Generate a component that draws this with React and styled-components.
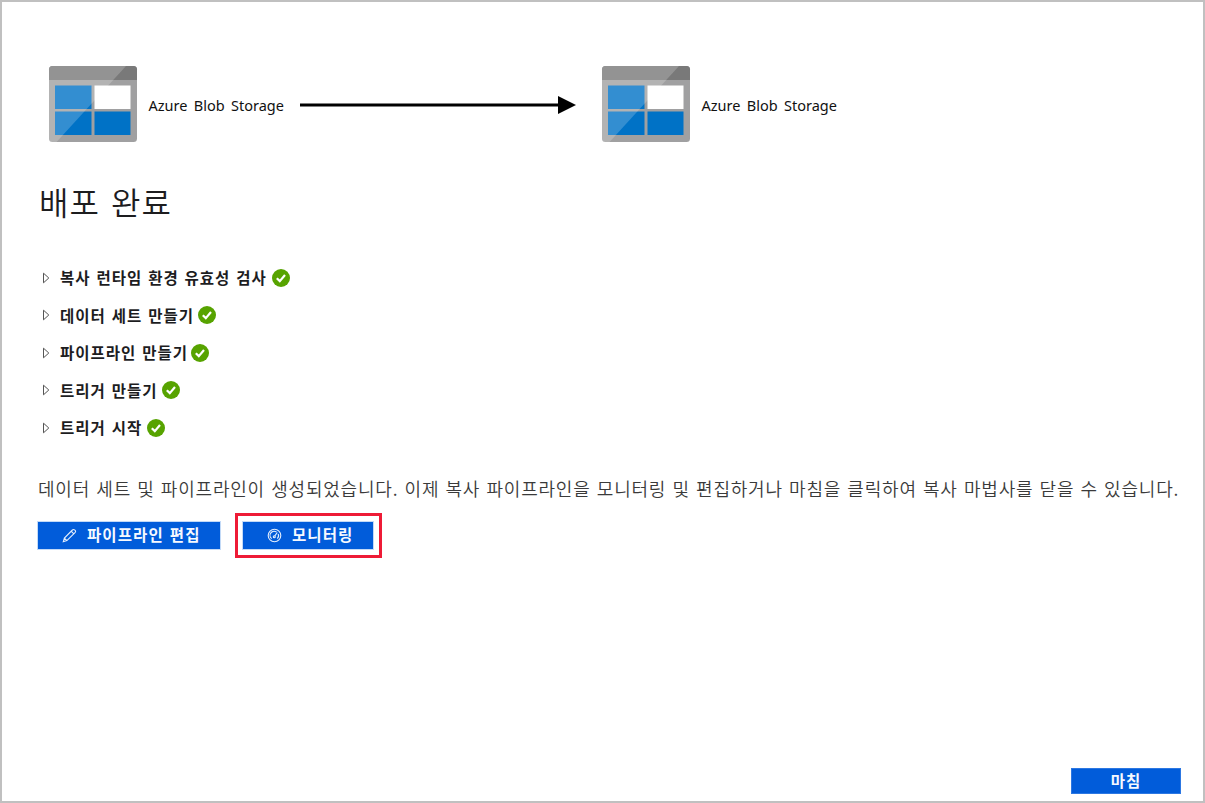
import React from "react";
import styled, { createGlobalStyle } from "styled-components";

const Global = createGlobalStyle`
  * { box-sizing: border-box; }
  body { margin: 0; background: #fff; }
`;

const Page = styled.main`
  width: 1205px;
  height: 803px;
  border: 2px solid #c0c0c0;
  padding: 62px 22px 7px 35px;
  display: flex;
  flex-direction: column;
  align-items: flex-start;
  background: #fff;
  font-family: "Noto Sans CJK KR", sans-serif;
  color: #1d1d1f;
  white-space: nowrap;
`;

const Flow = styled.section`
  display: flex;
  align-items: center;
  height: 80px;
  padding-left: 11px;
`;

const StoreName = styled.span`
  width: 136px;
  margin: 1px 15px 0 10.5px;
  font-family: "Noto Sans", sans-serif;
  font-size: 14.5px;
  letter-spacing: 0;
  word-spacing: 2.6px;
  line-height: 20px;
  color: #111;
`;

const Arrow = styled.svg`
  width: 276px;
  height: 20px;
  margin: 2px 25.5px 0 0;
`;

const StoreSvg = styled.svg`
  width: 90px;
  height: 78px;
`;

const Title = styled.h1`
  margin: 32px 0 0 2px;
  font-size: 32px;
  font-weight: 350;
  line-height: 50px;
  letter-spacing: 1px;
  word-spacing: 3px;
`;

const Steps = styled.ul`
  list-style: none;
  margin: 33px 0 0;
  padding: 0 0 0 5px;
`;

const Step = styled.li`
  display: flex;
  align-items: center;
  height: 37.5px;
`;

const Caret = styled.svg`
  width: 8px;
  height: 12px;
  margin-right: 10px;
`;

const StepLabel = styled.span`
  width: ${(p) => p.$width}px;
  padding-bottom: 1px;
  font-size: 15.5px;
  font-weight: 700;
  line-height: 24px;
  letter-spacing: 1px;
  word-spacing: 1.4px;
`;

const Check = styled.svg`
  width: 18px;
  height: 18px;
`;

const Message = styled.p`
  margin: 27px 0 0 1px;
  font-size: 18px;
  font-weight: 350;
  line-height: 28px;
  letter-spacing: 0.8px;
  word-spacing: 1.4px;
  color: #3a3a3a;
`;

const Actions = styled.div`
  display: flex;
  align-items: center;
  margin-top: 11px;
  gap: 14px;
`;

const Highlight = styled.div`
  border: 3px solid #ee1b36;
  padding: 5px 5px 5px 4px;
  display: flex;
`;

const Button = styled.button`
  width: ${(p) => p.$width}px;
  height: ${(p) => p.$height || 29}px;
  padding: 0 0 ${(p) => p.$lift || 2}px ${(p) => p.$indent || 0}px;
  border: 1px solid ${(p) => p.$edge || "#c3daf7"};
  background: #015cda;
  background-clip: padding-box;
  color: #f6f9ff;
  display: flex;
  align-items: center;
  justify-content: ${(p) => (p.$indent ? "flex-start" : "center")};
  gap: 10px;
  font-family: inherit;
  font-size: 15.5px;
  font-weight: 700;
  line-height: 24px;
  letter-spacing: 1.1px;
  word-spacing: 1.4px;
`;

const ButtonIcon = styled.svg`
  width: 15px;
  height: 15px;
  flex: none;
  margin-top: 3px;
`;

const Footer = styled.footer`
  margin-top: auto;
  align-self: flex-end;
`;

const StorageIcon = () => (
  <StoreSvg viewBox="0 0 90 78">
    <rect x="1" y="1" width="88" height="76" rx="3.5" fill="#a0a0a1" />
    <path d="M1 15V4.500Q1 1 4.500 1H85.500Q89 1 89 4.500V15Z" fill="#797979" />
    <rect x="7" y="20.500" width="36.500" height="23.500" fill="#0072c6" />
    <rect x="46.500" y="20.500" width="36" height="23.500" fill="#fff" />
    <rect x="7" y="46.500" width="36.500" height="23.500" fill="#0072c6" />
    <rect x="46.500" y="46.500" width="36" height="23.500" fill="#0072c6" />
    <path d="M4.500 1H78L8.500 77H4.500Q1 77 1 73.500V4.500Q1 1 4.500 1Z" fill="#fff" opacity="0.2" />
  </StoreSvg>
);

const steps = [
  ["복사 런타임 환경 유효성 검사", 212],
  ["데이터 세트 만들기", 138],
  ["파이프라인 만들기", 131],
  ["트리거 만들기", 102],
  ["트리거 시작", 87],
];

export default function App() {
  return (
    <Page>
      <Global />
      <Flow>
        <StorageIcon />
        <StoreName>Azure Blob Storage</StoreName>
        <Arrow viewBox="0 0 276 20">
          <path d="M0 10H260" stroke="#000" strokeWidth="3" />
          <path d="M258 1L276 10L258 19Z" />
        </Arrow>
        <StorageIcon />
        <StoreName>Azure Blob Storage</StoreName>
      </Flow>
      <Title>배포 완료</Title>
      <Steps>
        {steps.map(([label, width]) => (
          <Step key={label}>
            <Caret viewBox="0 0 8 12">
              <path d="M1.500 1.200L6.800 6L1.500 10.800Z" fill="none" stroke="#555" />
            </Caret>
            <StepLabel $width={width}>{label}</StepLabel>
            <Check viewBox="0 0 18 18">
              <circle cx="9" cy="9" r="9" fill="#57a300" />
              <path d="M4.800 9.200L7.800 12.100L13 6" fill="none" stroke="#fff" strokeWidth="2.200" />
            </Check>
          </Step>
        ))}
      </Steps>
      <Message>
        데이터 세트 및 파이프라인이 생성되었습니다. 이제 복사 파이프라인을 모니터링 및 편집하거나 마침을 클릭하여 복사 마법사를 닫을 수 있습니다.
      </Message>
      <Actions>
        <Button $width={184} $indent={24}>
          <ButtonIcon viewBox="0 0 15 15" fill="none" stroke="#e4eefc" strokeWidth="1.1">
            <path d="M1.300 13.700L2.400 10.100L10.400 2Q11.500 .9 12.900 2.100T13 4.600L4.900 12.600ZM2.400 10.100L4.900 12.600M9.200 3.200L11.800 5.800" />
          </ButtonIcon>
          파이프라인 편집
        </Button>
        <Highlight>
          <Button $width={132} $indent={24}>
            <ButtonIcon viewBox="0 0 15 15" fill="none" stroke="#e4eefc" strokeWidth="1.1">
              <circle cx="7.500" cy="7.500" r="6.300" />
              <path d="M4.700 10.600A4 4 0 0 1 9.600 4.100M11.200 6A4 4 0 0 1 10.300 10.600" />
              <circle cx="7.300" cy="8.800" r="1" />
              <path d="M7.800 7.800L10.300 4.500" />
            </ButtonIcon>
            모니터링
          </Button>
        </Highlight>
      </Actions>
      <Footer>
        <Button $width={110} $height={26} $lift={3} $edge="#2c77e2">마침</Button>
      </Footer>
    </Page>
  );
}
